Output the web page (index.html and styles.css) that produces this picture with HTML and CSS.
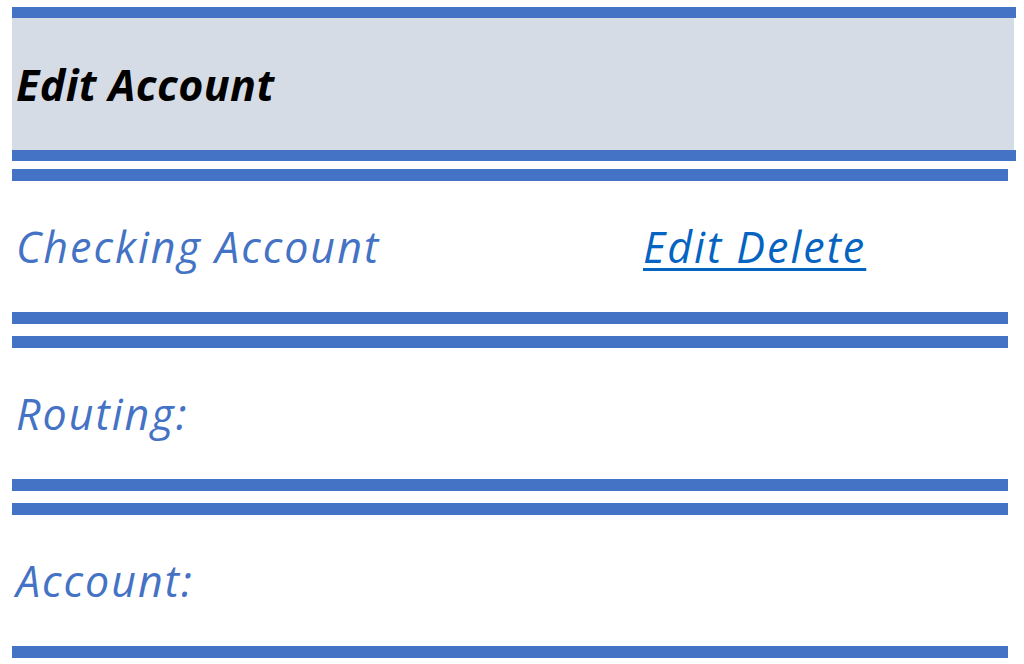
FILE: index.html
```html
<!DOCTYPE html>
<html lang="en">
<head>
    <meta charset="UTF-8">
    <meta name="viewport" content="width=device-width, initial-scale=1.0">
    <title>Edit Account</title>
    <link rel="stylesheet" href="styles.css">
</head>
<body>
    <div class="page">
        <div class="header">
            <h1>Edit Account</h1>
        </div>
        <div class="row">
            <span class="label">Checking Account</span>
            <span class="actions"><a href="#">Edit Delete</a></span>
        </div>
        <div class="row">
            <span class="label">Routing:</span>
        </div>
        <div class="row">
            <span class="label">Account:</span>
        </div>
    </div>
</body>
</html>
```

FILE: styles.css
```css
body {
    margin: 0;
    padding: 0;
    background: #FFFFFF;
    font-family: "Open Sans", "Noto Sans", sans-serif;
    font-style: italic;
}
.page {
    display: flex;
    flex-direction: column;
    gap: 12px;
    padding: 7px 0 0 12px;
}
.header {
    width: 1004px;
    height: 132px;
    border-top: 11px solid #4472C4;
    border-bottom: 11px solid #4472C4;
    background: linear-gradient(to right, #D6DCE5 1002px, #FFFFFF 1002px);
    display: flex;
    align-items: center;
    margin-bottom: -4px;
}
h1 {
    margin: 0 0 0 4px;
    font-size: 43px;
    font-weight: 700;
    letter-spacing: 0.4px;
    color: #000000;
}
.row {
    width: 996px;
    height: 131px;
    border-top: 12px solid #4472C4;
    border-bottom: 12px solid #4472C4;
    display: grid;
    grid-template-columns: 631px 1fr;
    align-items: center;
}
.label {
    padding-left: 4px;
    font-size: 43px;
    letter-spacing: 2px;
    color: #4472C4;
}
.actions a {
    font-size: 43px;
    letter-spacing: 2px;
    color: #0563C1;
    text-decoration: underline;
    text-decoration-thickness: 3px;
    text-underline-offset: 5px;
}
```
